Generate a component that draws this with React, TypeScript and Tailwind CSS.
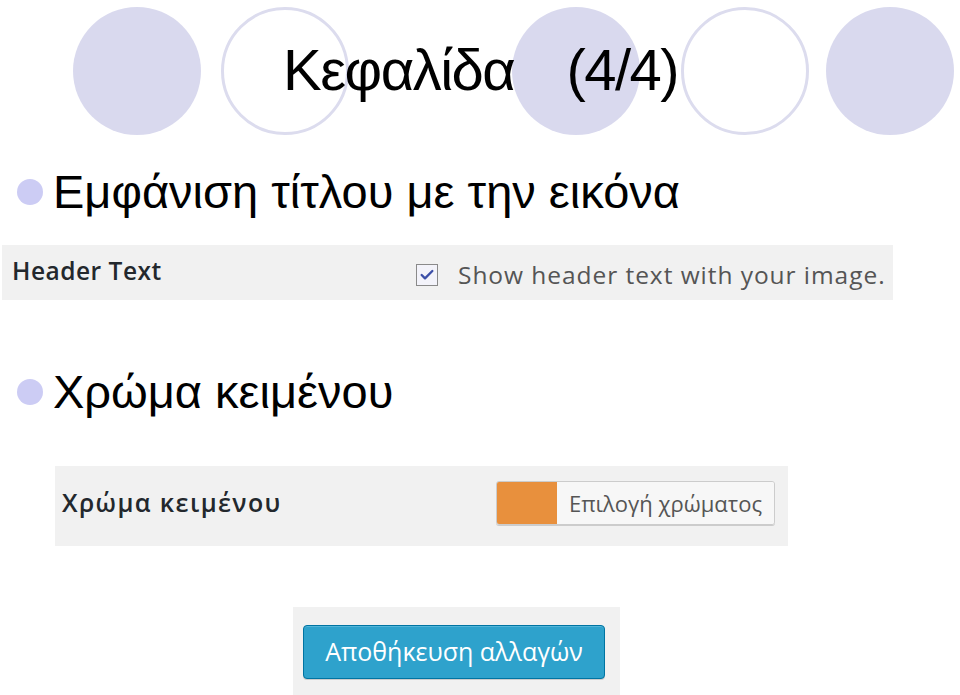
import { Check } from 'lucide-react'

const CIRCLES = [
  { filled: true, ml: 'ml-[73px]' },
  { filled: false, ml: 'ml-[20px]' },
  { filled: true, ml: 'ml-[163px]' },
  { filled: false, ml: 'ml-[41px]' },
  { filled: true, ml: 'ml-[17px]' },
]

function Bullet({ children }: { children: React.ReactNode }) {
  return (
    <div className="flex items-center pl-[17px]">
      <span className="w-[26px] h-[26px] rounded-full bg-[#ccccf4] shrink-0" />
      <span className="ml-[10px] text-[47px] leading-[48px] text-black font-['Liberation_Sans',Arial,sans-serif]">
        {children}
      </span>
    </div>
  )
}

export default function App() {
  return (
    <div className="w-[960px] h-[695px] bg-white overflow-hidden">
      {/* Slide header with decorative circles */}
      <div className="relative h-[145px] pt-[7px] flex items-start">
        {CIRCLES.map((c, i) => (
          <div
            key={i}
            className={`${c.ml} w-[128px] h-[128px] rounded-full shrink-0 ${
              c.filled ? 'bg-[#d9d9ee]' : 'border-[3px] border-[#dcdcee]'
            }`}
          />
        ))}
        <h1 className="absolute left-[283px] top-[40px] flex text-[58px] leading-[60px] text-black font-['Liberation_Sans',Arial,sans-serif] tracking-[-1.5px]">
          <span>Κεφαλίδα</span>
          <span className="ml-[52px]">(4/4)</span>
        </h1>
      </div>

      <div className="mt-[23px]">
        <Bullet>Εμφάνιση τίτλου με την εικόνα</Bullet>
      </div>

      {/* Header text panel */}
      <div className="mt-[29px] ml-[2px] w-[891px] h-[55px] bg-[#f1f1f1] flex items-start font-['Open_Sans',sans-serif]">
        <span className="ml-[10px] w-[404px] mt-[11px] text-[24.5px] leading-[30px] font-semibold tracking-[0.5px] text-[#23282d]">
          Header Text
        </span>
        <span className="mt-[19px] w-[22px] h-[22px] border border-[#8a8a8a] bg-[#f3f3fa] flex items-center justify-center">
          <Check size={16} strokeWidth={3.5} className="text-[#3c4fa8]" />
        </span>
        <span className="ml-[20px] mt-[15px] text-[24.5px] leading-[30px] tracking-[0.95px] text-[#555]">
          Show header text with your image.
        </span>
      </div>

      <div className="mt-[68px]">
        <Bullet>Χρώμα κειμένου</Bullet>
      </div>

      {/* Text colour panel */}
      <div className="mt-[50px] ml-[55px] w-[733px] h-[80px] bg-[#f1f1f1] flex items-start font-['Open_Sans',sans-serif]">
        <span className="ml-[7px] mt-[21px] text-[25px] leading-[30px] font-semibold tracking-[1.4px] text-[#23282d]">
          Χρώμα κειμένου
        </span>
        <div className="ml-auto mr-[13px] mt-[15px] flex h-[44px] rounded-[3px] border border-[#ccc] overflow-hidden shadow-[0_1px_0_#ccc]">
          <span className="w-[60px] bg-[#e8903d]" />
          <span className="px-[12px] bg-[#f7f7f7] flex items-center text-[22px] text-[#555]">Επιλογή χρώματος</span>
        </div>
      </div>

      {/* Save panel */}
      <div className="mt-[61px] ml-[293px] w-[327px] h-[90px] bg-[#f1f1f1] pt-[18px] pl-[10px] font-['Open_Sans',sans-serif]">
        <button className="w-[302px] h-[54px] rounded-[4px] bg-[#2ea2cc] border border-[#0074a2] shadow-[inset_0_1px_0_rgba(120,200,230,0.5),0_1px_0_rgba(0,0,0,0.15)] text-white text-[25px]">
          Αποθήκευση αλλαγών
        </button>
      </div>
    </div>
  )
}
